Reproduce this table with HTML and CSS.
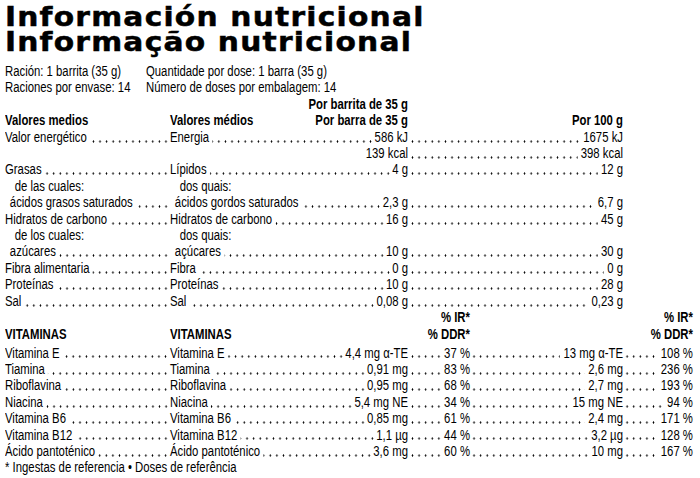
FILE: index.html
```html
<!DOCTYPE html>
<html lang="es">
<head>
<meta charset="utf-8">
<title>Información nutricional</title>
<link rel="stylesheet" href="styles.css">
</head>
<body>
<div class="label">
  <h1 class="title"><span>Información nutricional</span><span>Informação nutricional</span></h1>

  <div class="body">
    <div class="intro">
      <div class="irow"><span class="ic1">Ración: 1 barrita (35 g)</span><span>Quantidade por dose: 1 barra (35 g)</span></div>
      <div class="irow"><span class="ic1">Raciones por envase: 14</span><span>Número de doses por embalagem: 14</span></div>
    </div>

    <div class="table">
      <div class="row b"><div class="c1"></div><div class="c2 r"><span>Por barrita de 35 g</span></div></div>
      <div class="row b"><div class="c1">Valores medios</div><div class="c2"><span>Valores médios</span><span class="fill"></span><span>Por barra de 35 g</span></div><div class="c3 r"><span>Por 100 g</span></div></div>

      <div class="row"><div class="c1"><span>Valor energético</span><i class="ld"></i></div><div class="c2"><span>Energia</span><i class="ld"></i><span class="v">586 kJ</span></div><div class="c3"><i class="ld l"></i><span class="v">1675 kJ</span></div></div>
      <div class="row"><div class="c1"></div><div class="c2 r"><span class="v">139 kcal</span></div><div class="c3"><i class="ld l"></i><span class="v">398 kcal</span></div></div>
      <div class="row"><div class="c1"><span>Grasas</span><i class="ld"></i></div><div class="c2"><span>Lípidos</span><i class="ld"></i><span class="v">4 g</span></div><div class="c3"><i class="ld l"></i><span class="v">12 g</span></div></div>
      <div class="row"><div class="c1 in2">de las cuales:</div><div class="c2 in2">dos quais:</div></div>
      <div class="row"><div class="c1 in1"><span>ácidos grasos saturados</span><i class="ld"></i></div><div class="c2 in1"><span>ácidos gordos saturados</span><i class="ld"></i><span class="v">2,3 g</span></div><div class="c3"><i class="ld l"></i><span class="v">6,7 g</span></div></div>
      <div class="row"><div class="c1"><span>Hidratos de carbono</span><i class="ld"></i></div><div class="c2"><span>Hidratos de carbono</span><i class="ld"></i><span class="v">16 g</span></div><div class="c3"><i class="ld l"></i><span class="v">45 g</span></div></div>
      <div class="row"><div class="c1 in2">de los cuales:</div><div class="c2 in2">dos quais:</div></div>
      <div class="row"><div class="c1 in1"><span>azúcares</span><i class="ld"></i></div><div class="c2 in1"><span>açúcares</span><i class="ld"></i><span class="v">10 g</span></div><div class="c3"><i class="ld l"></i><span class="v">30 g</span></div></div>
      <div class="row"><div class="c1"><span>Fibra alimentaria</span><i class="ld"></i></div><div class="c2"><span>Fibra</span><i class="ld"></i><span class="v">0 g</span></div><div class="c3"><i class="ld l"></i><span class="v">0 g</span></div></div>
      <div class="row"><div class="c1"><span>Proteínas</span><i class="ld"></i></div><div class="c2"><span>Proteínas</span><i class="ld"></i><span class="v">10 g</span></div><div class="c3"><i class="ld l"></i><span class="v">28 g</span></div></div>
      <div class="row"><div class="c1"><span>Sal</span><i class="ld"></i></div><div class="c2"><span>Sal</span><i class="ld"></i><span class="v">0,08 g</span></div><div class="c3"><i class="ld l"></i><span class="v">0,23 g</span></div></div>

      <div class="row b"><div class="c1"></div><div class="c2"></div><div class="c3s r">% IR*</div><div class="c4"></div><div class="c5 r">% IR*</div></div>
      <div class="row b vh"><div class="c1">VITAMINAS</div><div class="c2">VITAMINAS</div><div class="c3s r">% DDR*</div><div class="c4"></div><div class="c5 r">% DDR*</div></div>

      <div class="row"><div class="c1"><span>Vitamina E</span><i class="ld"></i></div><div class="c2"><span>Vitamina E</span><i class="ld"></i><span class="v">4,4 mg α-TE</span></div><div class="c3s"><i class="ld l"></i><span class="v">37 %</span></div><div class="c4"><i class="ld l"></i><span class="v">13 mg α-TE</span></div><div class="c5"><i class="ld l"></i><span class="v">108 %</span></div></div>
      <div class="row"><div class="c1"><span>Tiamina</span><i class="ld"></i></div><div class="c2"><span>Tiamina</span><i class="ld"></i><span class="v">0,91 mg</span></div><div class="c3s"><i class="ld l"></i><span class="v">83 %</span></div><div class="c4"><i class="ld l"></i><span class="v">2,6 mg</span></div><div class="c5"><i class="ld l"></i><span class="v">236 %</span></div></div>
      <div class="row"><div class="c1"><span>Riboflavina</span><i class="ld"></i></div><div class="c2"><span>Riboflavina</span><i class="ld"></i><span class="v">0,95 mg</span></div><div class="c3s"><i class="ld l"></i><span class="v">68 %</span></div><div class="c4"><i class="ld l"></i><span class="v">2,7 mg</span></div><div class="c5"><i class="ld l"></i><span class="v">193 %</span></div></div>
      <div class="row"><div class="c1"><span>Niacina</span><i class="ld"></i></div><div class="c2"><span>Niacina</span><i class="ld"></i><span class="v">5,4 mg NE</span></div><div class="c3s"><i class="ld l"></i><span class="v">34 %</span></div><div class="c4"><i class="ld l"></i><span class="v">15 mg NE</span></div><div class="c5"><i class="ld l"></i><span class="v">94 %</span></div></div>
      <div class="row"><div class="c1"><span>Vitamina B6</span><i class="ld"></i></div><div class="c2"><span>Vitamina B6</span><i class="ld"></i><span class="v">0,85 mg</span></div><div class="c3s"><i class="ld l"></i><span class="v">61 %</span></div><div class="c4"><i class="ld l"></i><span class="v">2,4 mg</span></div><div class="c5"><i class="ld l"></i><span class="v">171 %</span></div></div>
      <div class="row"><div class="c1"><span>Vitamina B12</span><i class="ld"></i></div><div class="c2"><span>Vitamina B12</span><i class="ld"></i><span class="v">1,1 µg</span></div><div class="c3s"><i class="ld l"></i><span class="v">44 %</span></div><div class="c4"><i class="ld l"></i><span class="v">3,2 µg</span></div><div class="c5"><i class="ld l"></i><span class="v">128 %</span></div></div>
      <div class="row"><div class="c1"><span>Ácido pantoténico</span><i class="ld"></i></div><div class="c2"><span>Ácido pantoténico</span><i class="ld"></i><span class="v">3,6 mg</span></div><div class="c3s"><i class="ld l"></i><span class="v">60 %</span></div><div class="c4"><i class="ld l"></i><span class="v">10 mg</span></div><div class="c5"><i class="ld l"></i><span class="v">167 %</span></div></div>
    </div>

    <p class="note">* Ingestas de referencia • Doses de referência</p>
  </div>
</div>
</body>
</html>
```

FILE: styles.css
```css
* { box-sizing: border-box; }

html, body {
  margin: 0;
  padding: 0;
  background: #fff;
  color: #000;
  overflow: hidden;
}

.label {
  --s: 0.81;
  padding: 4px 0 0 5px;
  width: 700px;
}

.title {
  margin: 0;
  font-family: "DejaVu Sans", sans-serif;
  font-weight: 700;
  font-size: 27px;
  line-height: 25px;
  letter-spacing: 1.1px;
  -webkit-text-stroke: 0.5px #000;
  display: flex;
  flex-direction: column;
  align-items: flex-start;
}

.title span {
  display: inline-block;
  transform: scaleX(1.1);
  transform-origin: left center;
  white-space: nowrap;
}

/* condensed body text: Arial-metric sans, narrowed horizontally */
.body {
  width: calc(695px / var(--s));
  transform: scaleX(var(--s));
  transform-origin: left top;
  font-family: "Liberation Sans", Arial, sans-serif;
  font-size: 14px;
  line-height: 16.4px;
}

.intro {
  margin-top: 9px;
}

.irow {
  display: flex;
  white-space: nowrap;
}

.ic1 { width: calc(141px / var(--s)); }

.row {
  display: flex;
  white-space: nowrap;
}

.row.b { font-weight: 700; }
.row.vh { margin-bottom: 2.6px; }

.c1, .c2, .c3, .c3s, .c4, .c5 {
  display: flex;
}

.c1 { width: calc(165px / var(--s)); }
.c2 { width: calc(238px / var(--s)); }
.c3 { width: calc(215px / var(--s)); }
.c3s { width: calc(62px / var(--s)); }
.c4 { width: calc(153px / var(--s)); }
.c5 { width: calc(70px / var(--s)); }

.r { justify-content: flex-end; }

.in1 { padding-left: 6px; }
.in2 { padding-left: 12px; }

.fill { flex: 1; }

.ld {
  flex: 1;
  min-width: 0;
  align-self: stretch;
  margin: 0 1px 0 4px;
  background-image: radial-gradient(circle at center, #000 0.85px, rgba(0,0,0,0) 1.3px);
  background-size: calc(6.6px / var(--s)) 3px;
  background-repeat: repeat-x;
  background-position: right 0 bottom 2.5px;
}

.ld.l {
  margin: 0 4px 0 1px;
  background-position: left 0 bottom 2.5px;
}

.note {
  margin: 0;
}
```
